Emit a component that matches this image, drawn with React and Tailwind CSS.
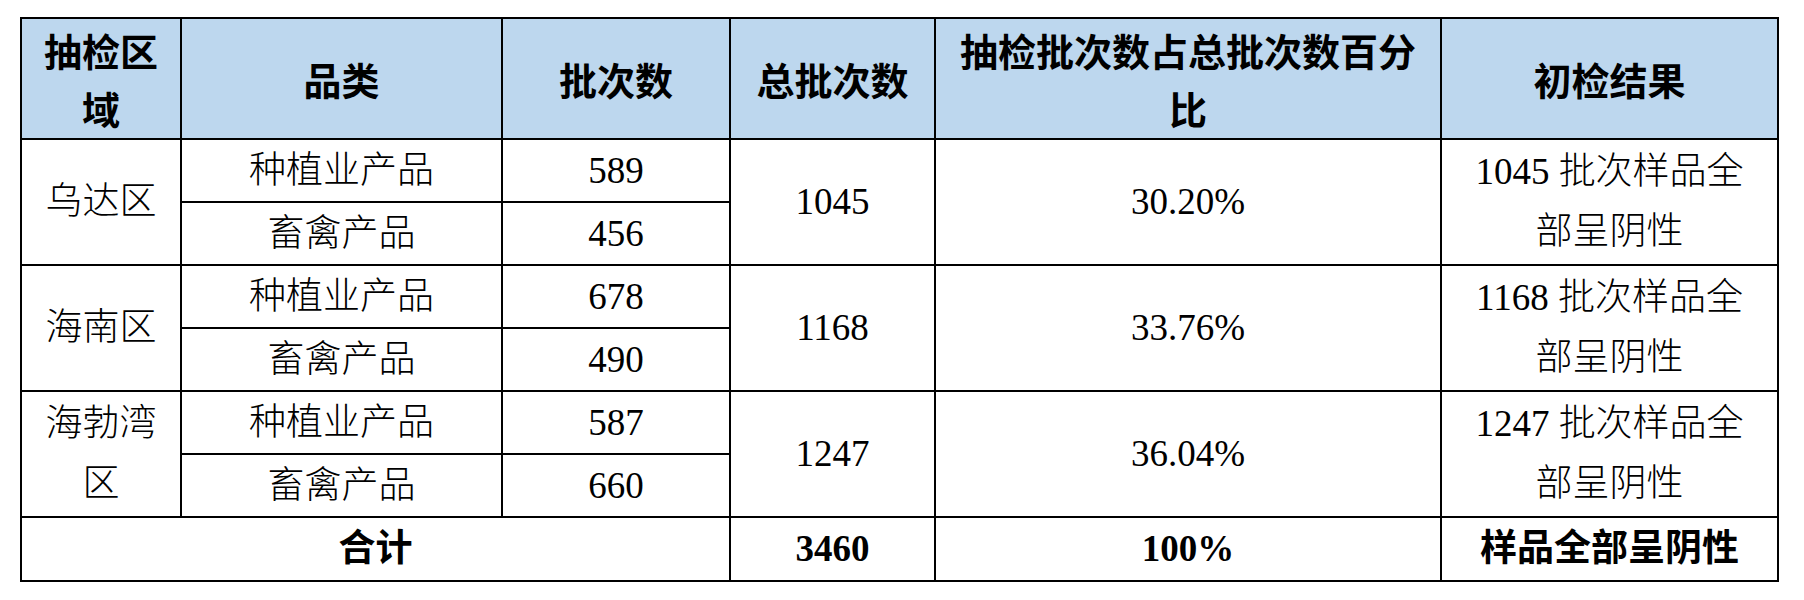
import React from "react";

const data = [
  {
    region: ["乌达区"],
    items: [
      { name: "种植业产品", count: "589" },
      { name: "畜禽产品", count: "456" },
    ],
    total: "1045",
    percent: "30.20%",
  },
  {
    region: ["海南区"],
    items: [
      { name: "种植业产品", count: "678" },
      { name: "畜禽产品", count: "490" },
    ],
    total: "1168",
    percent: "33.76%",
  },
  {
    region: ["海勃湾", "区"],
    items: [
      { name: "种植业产品", count: "587" },
      { name: "畜禽产品", count: "660" },
    ],
    total: "1247",
    percent: "36.04%",
  },
];

const Lines = ({ lines }) =>
  lines.map((l, i) => (
    <React.Fragment key={i}>
      {i > 0 && <br />}
      {l}
    </React.Fragment>
  ));

const th = "border-2 border-black bg-[#bdd7ee] px-3 text-center align-middle font-bold text-[38px] leading-[58px] text-black font-['Noto_Sans_CJK_SC',sans-serif]";
const td = "border-2 border-black px-3 text-center align-middle text-[37px] leading-[60px] text-black";
const tdTotal = "border-2 border-black px-3 text-center align-middle font-bold text-[37px] leading-[60px] text-black";

export default function App() {
  return (
    <div className="bg-white w-[1804px] h-[600px] pl-[20px] pt-[17px] font-['Liberation_Serif','DejaVu_Serif','Noto_Sans_CJK_SC',serif]">
      <table className="table-fixed border-collapse w-[1757px]">
        <colgroup>
          <col className="w-[160px]" />
          <col className="w-[321px]" />
          <col className="w-[228px]" />
          <col className="w-[205px]" />
          <col className="w-[506px]" />
          <col className="w-[337px]" />
        </colgroup>
        <thead>
          <tr className="h-[121px]">
            <th className={th}>
              抽检区
              <br />域
            </th>
            <th className={th}>品类</th>
            <th className={th}>批次数</th>
            <th className={th}>总批次数</th>
            <th className={th}>
              抽检批次数占总批次数百分
              <br />比
            </th>
            <th className={th}>初检结果</th>
          </tr>
        </thead>
        <tbody>
          {data.map((g) => (
            <React.Fragment key={g.total}>
              <tr className="h-[63px]">
                <td className={`${td} font-light`} rowSpan={2}>
                  <Lines lines={g.region} />
                </td>
                <td className={`${td} font-light`}>{g.items[0].name}</td>
                <td className={td}>{g.items[0].count}</td>
                <td className={td} rowSpan={2}>
                  {g.total}
                </td>
                <td className={td} rowSpan={2}>
                  {g.percent}
                </td>
                <td className={td} rowSpan={2}>
                  {g.total} <span className="font-light">批次样品全</span>
                  <br />
                  <span className="font-light">部呈阴性</span>
                </td>
              </tr>
              <tr className="h-[63px]">
                <td className={`${td} font-light`}>{g.items[1].name}</td>
                <td className={td}>{g.items[1].count}</td>
              </tr>
            </React.Fragment>
          ))}
          <tr className="h-[64px]">
            <td className={tdTotal} colSpan={3}>
              合计
            </td>
            <td className={tdTotal}>3460</td>
            <td className={tdTotal}>100%</td>
            <td className={tdTotal}>样品全部呈阴性</td>
          </tr>
        </tbody>
      </table>
    </div>
  );
}
